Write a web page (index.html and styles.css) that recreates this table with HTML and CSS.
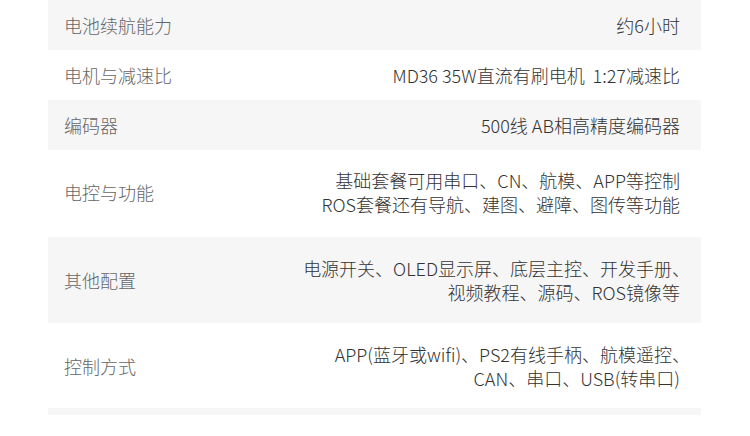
FILE: index.html
```html
<!DOCTYPE html>
<html lang="zh-CN">
<head>
<meta charset="utf-8">
<link rel="stylesheet" href="styles.css">
</head>
<body>
<div class="spec">
  <div class="row gray">
    <div class="label">电池续航能力</div>
    <div class="value">约6小时</div>
  </div>
  <div class="row">
    <div class="label">电机与减速比</div>
    <div class="value">MD36 35W直流有刷电机&nbsp;&nbsp;1:27减速比</div>
  </div>
  <div class="row gray">
    <div class="label">编码器</div>
    <div class="value">500线 AB相高精度编码器</div>
  </div>
  <div class="row tall r4">
    <div class="label">电控与功能</div>
    <div class="value">基础套餐可用串口、CN、航模、APP等控制<br>ROS套餐还有导航、建图、避障、图传等功能</div>
  </div>
  <div class="row tall gray r5">
    <div class="label">其他配置</div>
    <div class="value">电源开关、OLED显示屏、底层主控、开发手册<span class="endp">、</span><br>视频教程、源码、ROS镜像等</div>
  </div>
  <div class="row tall r6">
    <div class="label">控制方式</div>
    <div class="value">APP(蓝牙或wifi)、PS2有线手柄、航模遥控<span class="endp">、</span><br>CAN、串口、USB(转串口)</div>
  </div>
  <div class="foot gray"></div>
</div>
</body>
</html>
```
FILE: styles.css
```css
html, body {
  margin: 0;
  padding: 0;
  background: #ffffff;
}
body {
  font-family: "Noto Sans CJK SC", "Noto Sans", sans-serif;
  font-weight: 300;
  font-size: 18px;
  line-height: 24px;
}
.spec {
  margin-left: 48px;
  width: 653px;
}
.row {
  display: flex;
  align-items: center;
  justify-content: space-between;
  height: 50px;
  padding: 0 21px 0 16px;
  box-sizing: border-box;
}
.gray {
  background: #f6f6f6;
}
.label {
  color: #666666;
  white-space: nowrap;
}
.value {
  color: #333333;
  text-align: right;
  white-space: nowrap;
  flex-shrink: 0;
}
.endp {
  margin-right: -10px;
}
.r4 {
  height: 87px;
  padding-bottom: 3px;
}
.r5 { height: 86px; }
.r6 {
  height: 85px;
  padding-top: 1px;
}
.foot {
  height: 7px;
}
```
